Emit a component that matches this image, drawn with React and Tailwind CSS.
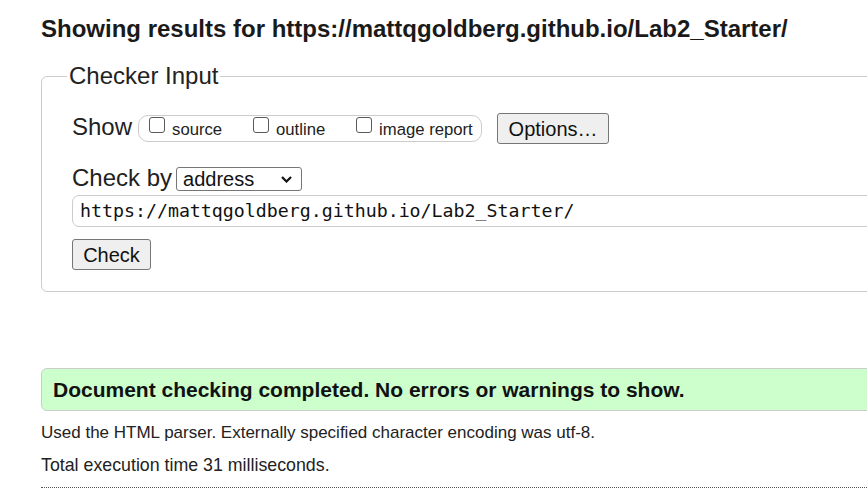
import React from "react";

function Box() {
  return <span className="block w-[16px] h-[16px] border-[1.5px] border-[#5a5a5a] rounded-[3px] bg-white shrink-0" />;
}

export default function App() {
  return (
    <div className="w-[867px] h-[493px] overflow-hidden bg-white text-[#222] font-['Liberation_Sans',Arial,sans-serif]">
      <div className="w-[1100px] pl-[41px] pt-[15px]">
        <h2 className="text-[24px] leading-[28px] font-bold text-[#1a1a1a]">
          Showing results for https://mattqgoldberg.github.io/Lab2_Starter/
        </h2>

        <fieldset className="mt-[18px] w-[900px] border border-[#cccccc] rounded-[6px] p-0">
          <legend className="ml-[25px] px-[2px] text-[24px] leading-[30px]">Checker Input</legend>
          <div className="pl-[30px] pt-[22px] pb-[21px]">
            {/* Show row */}
            <div className="flex items-start h-[31px]">
              <span className="text-[24px] leading-[28px]">Show</span>
              <div className="ml-[6px] mt-[2px] h-[27px] w-[344px] border border-[#cccccc] rounded-[10px] flex items-start pl-[10px] pt-[1px] text-[16.7px] leading-[19px]">
                <Box />
                <span className="ml-[7px] mt-[3px] w-[81px]">source</span>
                <Box />
                <span className="ml-[7px] mt-[3px] w-[80px]">outline</span>
                <Box />
                <span className="ml-[7px] mt-[3px]">image report</span>
              </div>
              <button className="ml-[15px] h-[31px] w-[112px] bg-[#efefef] border border-[#767676] rounded-[3px] text-[20px] leading-[28px] text-[#111]">
                Options…
              </button>
            </div>

            {/* Check by row */}
            <div className="mt-[20px] flex items-start h-[31px]">
              <span className="text-[24px] leading-[28px]">Check by</span>
              <div className="ml-[4px] mt-[3px] h-[24px] w-[126px] border border-[#767676] rounded-[3px] flex items-center justify-between pl-[6px] pr-[9px] text-[20px] leading-[22px] text-[#111]">
                <span>address</span>
                <svg width="11" height="7" viewBox="0 0 11 7" fill="none">
                  <path d="M1 1l4.5 4.5L10 1" stroke="#111" strokeWidth="2.2" />
                </svg>
              </div>
            </div>

            <div className="h-[32px] w-[860px] border border-[#cccccc] rounded-[7px] pl-[7px] font-['DejaVu_Sans_Mono',monospace] text-[18.25px] leading-[30px] text-[#111]">
              https://mattqgoldberg.github.io/Lab2_Starter/
            </div>

            <button className="mt-[12px] h-[31px] w-[79px] bg-[#efefef] border border-[#767676] rounded-[3px] text-[20px] leading-[28px] text-[#111]">
              Check
            </button>
          </div>
        </fieldset>

        <div className="mt-[76px] w-[900px] h-[43px] bg-[#ccffcc] border border-[#cccccc] rounded-[6px] pl-[11px] flex items-center text-[21px] font-bold text-[#111]">
          Document checking completed. No errors or warnings to show.
        </div>

        <p className="mt-[11px] text-[17px] leading-[22px]">
          Used the HTML parser. Externally specified character encoding was utf-8.
        </p>
        <p className="mt-[10px] text-[17.8px] leading-[22px]">Total execution time 31 milliseconds.</p>
        <div className="mt-[11px] w-[900px] border-t border-dotted border-[#555]" />
      </div>
    </div>
  );
}
